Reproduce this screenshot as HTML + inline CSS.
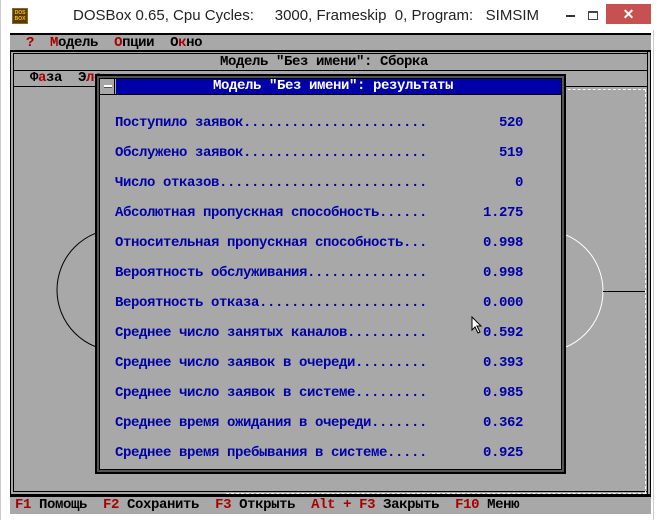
<!DOCTYPE html>
<html><head><meta charset="utf-8"><style>
*{margin:0;padding:0;box-sizing:border-box}
body{width:657px;height:520px;background:#fff;position:relative;overflow:hidden;font-family:"Liberation Mono",monospace}
.t{position:absolute;white-space:pre;font-size:14px;font-weight:bold;letter-spacing:-0.4px;line-height:16px}
.r{color:#a80000}
.b{color:#0000a8}
.abs{position:absolute}
</style></head><body>
<!-- title bar -->
<div class="abs" style="left:12px;top:8px;width:16px;height:16px;background:#5a3a00;border:1px solid #8a6a20"><div style="font:bold 5px 'Liberation Sans',sans-serif;color:#f0c020;line-height:6px;text-align:center;padding-top:1px">DOS<br>BOX</div></div>
<div class="abs" style="left:73px;top:7px;font:15px 'Liberation Sans',sans-serif;color:#222;white-space:pre">DOSBox 0.65, Cpu Cycles:     3000, Frameskip  0, Program:   SIMSIM</div>
<div class="abs" style="left:566px;top:15px;width:9px;height:2px;background:#333"></div>
<div class="abs" style="left:588px;top:11px;width:10px;height:9px;border:1px solid #444;border-top-width:2px"></div>
<div class="abs" style="left:606px;top:4px;width:45px;height:20px;background:#c75050;color:#fff;font:bold 14px 'Liberation Sans',sans-serif;text-align:center;line-height:20px">✕</div>
<div class="abs" style="left:0;top:0;width:1px;height:520px;background:#ccc"></div>
<div class="abs" style="left:653px;top:30px;width:1px;height:490px;background:#ccc"></div>
<!-- dosbox area -->
<div class="abs" style="left:10px;top:33px;width:641px;height:481px;background:#a8a8a8"></div>
<div class="abs" style="left:10px;top:33px;width:641px;height:2px;background:#000"></div>
<div class="t" style="left:26px;top:35px"><span class="r">?</span>  <span class="r">М</span>одель  <span class="r">О</span>пции  О<span class="r">к</span>но</div>
<!-- main window -->
<div class="abs" style="left:10px;top:50px;width:641px;height:445px;border:1px solid #000;border-width:1px"></div>
<div class="abs" style="left:13px;top:53px;width:635px;height:439px;border:1px solid #000"></div>
<div class="abs" style="left:10px;top:50px;width:641px;height:3px;border-top:2px solid #000"></div>
<div class="abs" style="left:13px;top:70px;width:635px;height:1px;background:#000"></div>
<div class="abs" style="left:13px;top:86px;width:635px;height:1px;background:#000"></div>
<div class="t" style="left:220px;top:54px">Модель "Без имени": Сборка</div>
<div class="t" style="left:30px;top:70px">Ф<span class="r">а</span>за  Э<span class="r">л</span>е</div>
<div class="abs" style="left:647px;top:50px;width:4px;height:445px;border-left:1px solid #000;border-right:1px solid #000"></div>
<!-- dashed rect -->
<div class="abs" style="left:226px;top:89px;width:420px;height:405px;border:1px dashed #fff;border-left:none"></div>
<!-- circles -->
<svg class="abs" style="left:0;top:0" width="657" height="520">
<circle cx="118" cy="290" r="61" fill="none" stroke="#000" stroke-width="1"/>
<circle cx="542" cy="291" r="61" fill="none" stroke="#fff" stroke-width="1"/>
<line x1="603" y1="291.5" x2="645" y2="291.5" stroke="#000"/>
</svg>
<!-- dialog -->
<div class="abs" style="left:95px;top:74px;width:471px;height:400px;background:#a8a8a8;border:2px solid #000"></div>
<div class="abs" style="left:97px;top:76px;width:467px;height:396px;border:2px solid #545454"></div>
<div class="abs" style="left:99px;top:78px;width:463px;height:392px;border:1px solid #000"></div>
<div class="abs" style="left:100px;top:79px;width:15px;height:15px;border-right:1px solid #000"></div>
<div class="abs" style="left:104px;top:85px;width:8px;height:3px;background:#fff;border-bottom:1px solid #545454"></div>
<div class="abs" style="left:116px;top:79px;width:445px;height:15px;background:#0000a8"></div>
<div class="abs" style="left:100px;top:94px;width:461px;height:1px;background:#000"></div>
<div class="t" style="left:213px;top:78px;color:#fff">Модель "Без имени": результаты</div>
<div class="t b" style="left:115px;top:108px;line-height:30px">Поступило заявок.......................
Обслужено заявок.......................
Число отказов..........................
Абсолютная пропускная способность......
Относительная пропускная способность...
Вероятность обслуживания...............
Вероятность отказа.....................
Среднее число занятых каналов..........
Среднее число заявок в очереди.........
Среднее число заявок в системе.........
Среднее время ожидания в очереди.......
Среднее время пребывания в системе.....</div>
<div class="t b" style="left:443px;top:108px;line-height:30px;text-align:right;width:80px">520
519
0
1.275
0.998
0.998
0.000
0.592
0.393
0.985
0.362
0.925</div>
<!-- cursor -->
<svg class="abs" style="left:471px;top:316px" width="12" height="18"><path d="M1 1 L1 14 L4 11 L7 17 L9 16 L6 10 L10 10 Z" fill="#fff" stroke="#000"/></svg>
<!-- status -->
<div class="abs" style="left:10px;top:495px;width:641px;height:2px;background:#000"></div>
<div class="t" style="left:15px;top:497px"><span class="r">F1</span> Помощь  <span class="r">F2</span> Сохранить  <span class="r">F3</span> Открыть  <span class="r">Alt + F3</span> Закрыть  <span class="r">F10</span> Меню</div>
</body></html>
